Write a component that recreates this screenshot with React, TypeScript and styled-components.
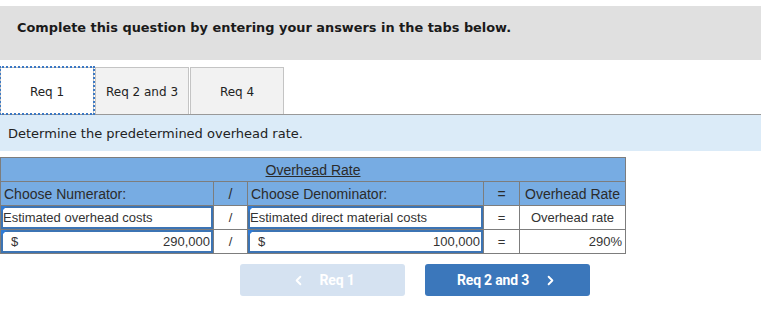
import styled, { createGlobalStyle } from 'styled-components';
import { ChevronLeft, ChevronRight } from 'lucide-react';

const GlobalStyle = createGlobalStyle`
	body {
		margin: 0;
		background: #fff;
		font-family: "DejaVu Sans", Verdana, sans-serif;
	}
`;

const tabs = ['Req 1', 'Req 2 and 3', 'Req 4'];

export default function App() {
	return (
		<>
			<GlobalStyle />
			<Page>
				<Banner>Complete this question by entering your answers in the tabs below.</Banner>
				<TabList>
					{tabs.map((t, i) => (
						<Tab key={t} $active={i === 0}>
							{t}
						</Tab>
					))}
				</TabList>
				<Prompt>Determine the predetermined overhead rate.</Prompt>
				<Grid>
					<colgroup>
						<col style={{ width: 213 }} />
						<col style={{ width: 34 }} />
						<col style={{ width: 236 }} />
						<col style={{ width: 36 }} />
						<col style={{ width: 106 }} />
					</colgroup>
					<tbody>
						<tr>
							<Head colSpan={5} $align="center">
								<u>Overhead Rate</u>
							</Head>
						</tr>
						<tr>
							<Head>Choose Numerator:</Head>
							<Head $align="center">/</Head>
							<Head>Choose Denominator:</Head>
							<Head $align="center">=</Head>
							<Head $align="center">Overhead Rate</Head>
						</tr>
						<tr>
							<Input>Estimated overhead costs</Input>
							<Cell $align="center">/</Cell>
							<Input>Estimated direct material costs</Input>
							<Cell $align="center">=</Cell>
							<Cell $align="center">Overhead rate</Cell>
						</tr>
						<tr>
							<Input>
								<Money>
									<span>$</span>
									<span>290,000</span>
								</Money>
							</Input>
							<Cell $align="center">/</Cell>
							<Input>
								<Money>
									<span>$</span>
									<span>100,000</span>
								</Money>
							</Input>
							<Cell $align="center">=</Cell>
							<Cell $align="right">290%</Cell>
						</tr>
					</tbody>
				</Grid>
				<Nav>
					<NavButton $disabled>
						<ChevronLeft size={15} strokeWidth={3} />
						Req 1
					</NavButton>
					<NavButton>
						Req 2 and 3
						<ChevronRight size={15} strokeWidth={3} />
					</NavButton>
				</Nav>
			</Page>
		</>
	);
}

const Page = styled.div`
	padding-top: 6px;
	width: 761px;
`;

const Banner = styled.div`
	height: 54px;
	box-sizing: border-box;
	background: #e0e0e0;
	padding: 14px 0 0 17px;
	font-weight: bold;
	font-size: 12.9px;
	line-height: 16px;
	color: #1a1a1a;
`;

const TabList = styled.div`
	display: flex;
	gap: 1px;
	margin-top: 7px;
	height: 47px;
`;

const Tab = styled.div<{ $active?: boolean }>`
	width: 94px;
	box-sizing: border-box;
	display: flex;
	align-items: center;
	justify-content: center;
	padding-top: 1px;
	font-size: 12px;
	color: #222;
	border: 1px solid #c4c4c4;
	border-bottom: none;
	background: ${(p) => (p.$active ? '#fff' : '#f2f2f2')};
	${(p) => p.$active && 'outline: 2px dotted #3b78c4; outline-offset: -1px;'}
	position: relative;
	z-index: ${(p) => (p.$active ? 1 : 0)};
`;

const Prompt = styled.div`
	height: 36px;
	border-top: 1px solid #999;
	background: #dbebf8;
	padding-left: 8px;
	display: flex;
	align-items: center;
	font-size: 13px;
	color: #222;
`;

const Grid = styled.table`
	margin-top: 6px;
	width: 625px;
	border-collapse: collapse;
	table-layout: fixed;
	font-family: "Liberation Sans", Arial, sans-serif;
	color: #333;

	td {
		height: 24px;
		padding: 0 3px;
		box-sizing: border-box;
		white-space: nowrap;
	}
`;

const Head = styled.td<{ $align?: string }>`
	background: #77ace3;
	border: 1px solid #7d7d7d;
	font-size: 14px;
	text-align: ${(p) => p.$align || 'left'};
	color: #2b2b2b;
`;

const Cell = styled.td<{ $align?: string }>`
	background: #fff;
	border: 1px solid #7d7d7d;
	font-size: 13px;
	text-align: ${(p) => p.$align || 'left'};
`;

const Input = styled.td`
	position: relative;
	background: #fff;
	border: 1px solid #7d7d7d;
	box-shadow: inset 0 0 0 2px #3c74b4;
	font-size: 13px;
	padding-left: 2px !important;

	&::before {
		content: '';
		position: absolute;
		left: 0;
		top: 0;
		border-left: 6px solid #2f7bd6;
		border-bottom: 6px solid transparent;
	}
`;

const Money = styled.div`
	display: flex;
	justify-content: space-between;
	padding-left: 8px;
`;

const Nav = styled.div`
	display: flex;
	gap: 20px;
	margin-top: 10px;
	padding-left: 240px;
`;

const NavButton = styled.div<{ $disabled?: boolean }>`
	width: 165px;
	height: 32px;
	border-radius: 3px;
	display: flex;
	align-items: center;
	justify-content: center;
	gap: 14px;
	font-family: Roboto, "Liberation Sans", sans-serif;
	font-weight: 700;
	font-size: 14px;
	color: #fff;
	background: ${(p) => (p.$disabled ? '#d5e2f1' : '#3b77bb')};
	letter-spacing: -0.2px;
`;
